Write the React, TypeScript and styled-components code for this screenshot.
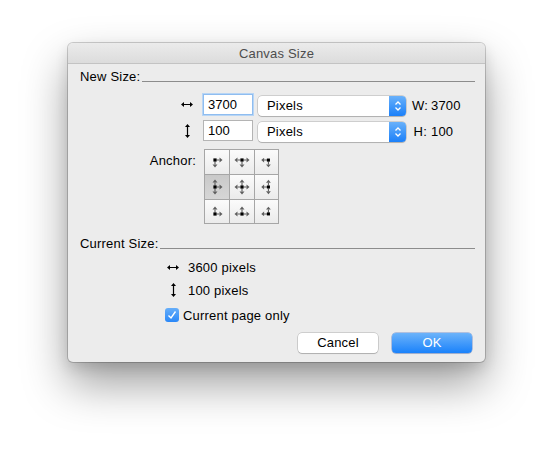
import React from 'react';
import styled, { createGlobalStyle } from 'styled-components';

const GlobalStyle = createGlobalStyle`
  html, body {
    margin: 0;
    padding: 0;
    background: #ffffff;
  }
  body {
    font-family: "Liberation Sans", Arial, sans-serif;
    font-size: 13px;
    letter-spacing: 0.2px;
    color: #000;
  }
`;

const HArrow: React.FC = () => (
  <svg width="12" height="7" viewBox="0 0 12 7">
    <line x1="2" y1="3.5" x2="10" y2="3.5" stroke="#000" strokeWidth="1.2" />
    <polygon points="0,3.5 3,1 3,6" fill="#000" />
    <polygon points="12,3.5 9,1 9,6" fill="#000" />
  </svg>
);

const VArrow: React.FC = () => (
  <svg width="7" height="14" viewBox="0 0 7 14">
    <line x1="3.5" y1="2" x2="3.5" y2="12" stroke="#000" strokeWidth="1.2" />
    <polygon points="3.5,0 1,3 6,3" fill="#000" />
    <polygon points="3.5,14 1,11 6,11" fill="#000" />
  </svg>
);

const Stepper: React.FC = () => (
  <svg width="8" height="12" viewBox="0 0 8 12">
    <polyline points="1.5,4.5 4,2 6.5,4.5" fill="none" stroke="#fff" strokeWidth="1.3" />
    <polyline points="1.5,7.5 4,10 6.5,7.5" fill="none" stroke="#fff" strokeWidth="1.3" />
  </svg>
);

type Dir = [number, number];

// one grey arrow pointing away from the anchor dot
const AnchorArrow: React.FC<{ x: number; y: number; d: Dir }> = ({ x, y, d }) => {
  const [dx, dy] = d;
  const tipX = x + dx * 7.5;
  const tipY = y + dy * 7.5;
  const bx = x + dx * 4.5;
  const by = y + dy * 4.5;
  return (
    <g>
      <line
        x1={x + dx * 1.5}
        y1={y + dy * 1.5}
        x2={bx}
        y2={by}
        stroke="#5a5a5a"
        strokeWidth="1.1"
      />
      <polygon
        points={`${tipX},${tipY} ${bx + dy * 2.5},${by + dx * 2.5} ${bx - dy * 2.5},${by - dx * 2.5}`}
        fill="#5e5e5e"
      />
    </g>
  );
};

const AnchorGlyph: React.FC<{ row: number; col: number }> = ({ row, col }) => {
  const dirs: Dir[] = [];
  if (col > 0) dirs.push([-1, 0]);
  if (col < 2) dirs.push([1, 0]);
  if (row > 0) dirs.push([0, -1]);
  if (row < 2) dirs.push([0, 1]);
  const cx = 12 - (col < 2 ? 2 : 0) + (col > 0 ? 2 : 0);
  const cy = 12 - (row < 2 ? 2 : 0) + (row > 0 ? 2 : 0);
  return (
    <svg width="24" height="24" viewBox="0 0 24 24">
      {dirs.map((d, i) => (
        <AnchorArrow key={i} x={cx} y={cy} d={d} />
      ))}
      <rect x={cx - 1.6} y={cy - 1.6} width="3.2" height="3.2" fill="#000" />
    </svg>
  );
};

export default function App() {
  const cells = [0, 1, 2, 3, 4, 5, 6, 7, 8];
  return (
    <S.Page>
      <GlobalStyle />
      <S.Dialog>
        <S.TitleBar>Canvas Size</S.TitleBar>
        <S.Body>
          <S.SectionHeader>
            <span>New Size:</span>
            <S.Rule />
          </S.SectionHeader>

          <S.FieldRow $top={9}>
            <S.IconCell>
              <HArrow />
            </S.IconCell>
            <S.NumberInput $focused defaultValue="3700" />
            <S.Select>
              <S.SelectText>Pixels</S.SelectText>
              <S.SelectStepper>
                <Stepper />
              </S.SelectStepper>
            </S.Select>
            <S.Result>
              <S.ResultLabel>W:</S.ResultLabel>
              <span>3700</span>
            </S.Result>
          </S.FieldRow>

          <S.FieldRow $top={5}>
            <S.IconCell>
              <VArrow />
            </S.IconCell>
            <S.NumberInput defaultValue="100" />
            <S.Select>
              <S.SelectText>Pixels</S.SelectText>
              <S.SelectStepper>
                <Stepper />
              </S.SelectStepper>
            </S.Select>
            <S.Result>
              <S.ResultLabel>H:</S.ResultLabel>
              <span>100</span>
            </S.Result>
          </S.FieldRow>

          <S.AnchorRow>
            <S.AnchorLabel>Anchor:</S.AnchorLabel>
            <S.AnchorGrid>
              {cells.map((i) => (
                <S.AnchorCell key={i} $selected={i === 3}>
                  <AnchorGlyph row={Math.floor(i / 3)} col={i % 3} />
                </S.AnchorCell>
              ))}
            </S.AnchorGrid>
          </S.AnchorRow>

          <S.SectionHeader $top={12}>
            <span>Current Size:</span>
            <S.Rule />
          </S.SectionHeader>

          <S.InfoRow $top={7}>
            <S.InfoIcon>
              <HArrow />
            </S.InfoIcon>
            <span>3600 pixels</span>
          </S.InfoRow>
          <S.InfoRow $top={7}>
            <S.InfoIcon>
              <VArrow />
            </S.InfoIcon>
            <span>100 pixels</span>
          </S.InfoRow>

          <S.CheckRow>
            <S.Checkbox>
              <svg width="10" height="10" viewBox="0 0 10 10">
                <polyline
                  points="1.5,5.5 4,8 8.5,1.5"
                  fill="none"
                  stroke="#fff"
                  strokeWidth="1.4"
                />
              </svg>
            </S.Checkbox>
            <span>Current page only</span>
          </S.CheckRow>

          <S.Buttons>
            <S.Button>Cancel</S.Button>
            <S.Button $primary>OK</S.Button>
          </S.Buttons>
        </S.Body>
      </S.Dialog>
    </S.Page>
  );
}

const S = {
  Page: styled.div`
    width: 554px;
    height: 454px;
    padding: 43px 0 0 68px;
    box-sizing: border-box;
  `,
  Dialog: styled.div`
    width: 417px;
    background: #ececec;
    border-radius: 5px;
    box-shadow: 0 0 0 1px rgba(0, 0, 0, 0.18), 0 22px 45px rgba(0, 0, 0, 0.38),
      0 6px 14px rgba(0, 0, 0, 0.12);
    overflow: hidden;
  `,
  TitleBar: styled.div`
    height: 20px;
    line-height: 21px;
    text-align: center;
    color: #4d4d4d;
    background: linear-gradient(#ebebeb, #dcdcdc);
    border-bottom: 1px solid #c3c3c3;
  `,
  Body: styled.div`
    padding: 5px 10px 9px 12px;
    display: flex;
    flex-direction: column;
  `,
  SectionHeader: styled.div<{ $top?: number }>`
    display: flex;
    align-items: flex-end;
    height: 16px;
    line-height: 16px;
    margin-top: ${(p) => p.$top ?? 0}px;
  `,
  Rule: styled.div`
    flex: 1;
    height: 1px;
    background: #8c8c8c;
    margin: 0 0 3px 2px;
  `,
  FieldRow: styled.div<{ $top: number }>`
    display: flex;
    align-items: center;
    margin-top: ${(p) => p.$top}px;
    padding-left: 97px;
    height: 21px;
  `,
  IconCell: styled.div`
    width: 20px;
    display: flex;
    justify-content: center;
    align-items: center;
  `,
  NumberInput: styled.input<{ $focused?: boolean }>`
    width: 50px;
    height: 21px;
    box-sizing: border-box;
    margin: 0 0 0 6px;
    padding: 0 4px;
    font: inherit;
    font-size: 13px;
    color: #000;
    background: #fff;
    border: 1px solid ${(p) => (p.$focused ? '#8fbdf0' : '#b4b4b4')};
    box-shadow: ${(p) => (p.$focused ? '0 0 0 1px #b7d5f5' : 'none')};
    outline: none;
    border-radius: 0;
  `,
  Select: styled.div`
    margin: 2px 0 0 5px;
    align-self: flex-start;
    width: 148px;
    height: 20px;
    box-sizing: border-box;
    display: flex;
    background: #fff;
    border-radius: 4px;
    box-shadow: 0 0 0 0.5px rgba(0, 0, 0, 0.25), 0 1px 1px rgba(0, 0, 0, 0.15);
    overflow: hidden;
  `,
  SelectText: styled.div`
    flex: 1;
    padding-left: 9px;
    line-height: 20px;
  `,
  SelectStepper: styled.div`
    width: 17px;
    display: flex;
    align-items: center;
    justify-content: center;
    background: linear-gradient(#69b1fa, #1b80f9);
  `,
  Result: styled.div`
    display: flex;
    margin: 2px 0 0 6px;
  `,
  ResultLabel: styled.span`
    width: 15px;
    text-align: right;
    margin-right: 4px;
  `,
  AnchorRow: styled.div`
    display: flex;
    align-items: flex-start;
    margin-top: 8px;
  `,
  AnchorLabel: styled.div`
    width: 116px;
    text-align: right;
    margin-top: 4px;
  `,
  AnchorGrid: styled.div`
    margin-left: 8px;
    display: grid;
    grid-template-columns: 24px 24px 23px;
    grid-template-rows: 24px 24px 23px;
    gap: 1px;
    padding: 1px;
    background: #a6a6a6;
  `,
  AnchorCell: styled.div<{ $selected?: boolean }>`
    display: flex;
    overflow: hidden;
    background: ${(p) =>
      p.$selected ? 'linear-gradient(#c9c9c9, #d6d6d6)' : 'linear-gradient(#fbfbfb, #ebebeb)'};
  `,
  InfoRow: styled.div<{ $top: number }>`
    display: flex;
    align-items: center;
    height: 16px;
    margin-top: ${(p) => p.$top}px;
    padding-left: 83px;
  `,
  InfoIcon: styled.div`
    width: 20px;
    margin-right: 5px;
    display: flex;
    justify-content: center;
  `,
  CheckRow: styled.div`
    display: flex;
    align-items: center;
    height: 16px;
    margin-top: 9px;
    padding-left: 85px;
    gap: 4px;
  `,
  Checkbox: styled.div`
    width: 14px;
    height: 14px;
    border-radius: 3px;
    background: linear-gradient(#66aef9, #2a88f8);
    display: flex;
    align-items: center;
    justify-content: center;
  `,
  Buttons: styled.div`
    display: flex;
    justify-content: flex-end;
    gap: 14px;
    margin-top: 10px;
    padding-right: 3px;
  `,
  Button: styled.div<{ $primary?: boolean }>`
    width: 80px;
    height: 20px;
    line-height: 20px;
    text-align: center;
    border-radius: 4px;
    box-sizing: border-box;
    color: ${(p) => (p.$primary ? '#fff' : '#000')};
    background: ${(p) => (p.$primary ? 'linear-gradient(#6cb3fa, #1a82fb)' : '#fff')};
    box-shadow: ${(p) =>
      p.$primary
        ? '0 0 0 0.5px rgba(0, 60, 180, 0.5), 0 1px 1px rgba(0, 0, 0, 0.1)'
        : '0 0 0 0.5px rgba(0, 0, 0, 0.25), 0 1px 1px rgba(0, 0, 0, 0.15)'};
  `,
};
